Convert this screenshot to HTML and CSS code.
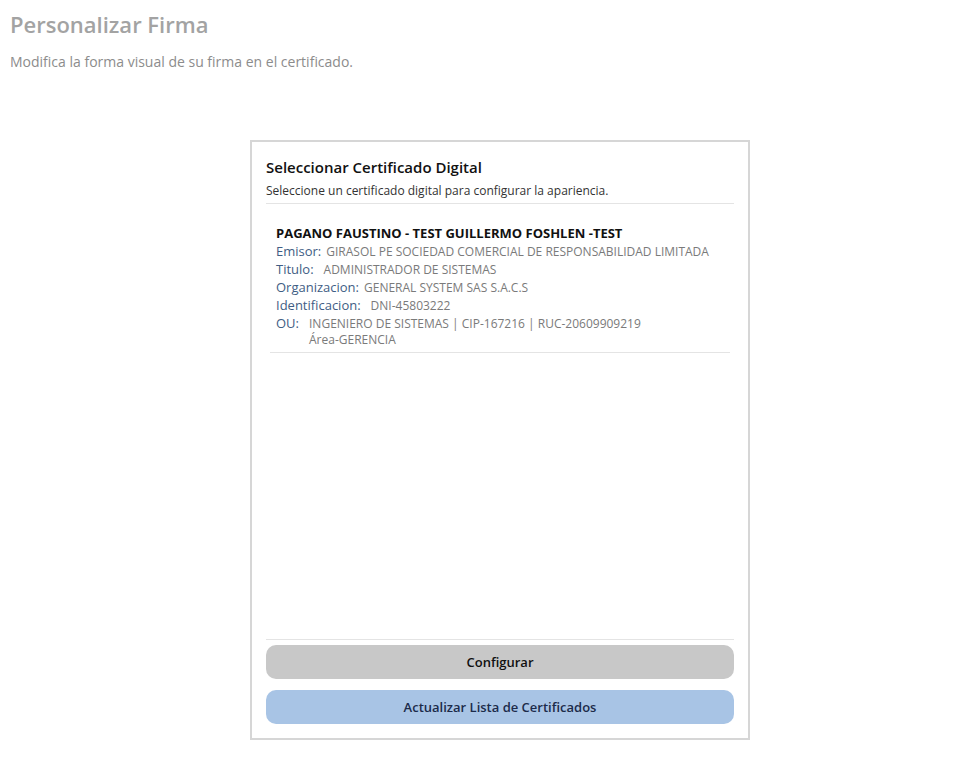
FILE: index.html
```html
<!DOCTYPE html>
<html lang="es">
<head>
<meta charset="UTF-8">
<meta name="viewport" content="width=device-width, initial-scale=1.0">
<title>Personalizar Firma</title>
<link rel="stylesheet" href="styles.css">
</head>
<body>
<div class="page-header">
    <h1>Personalizar Firma</h1>
    <p>Modifica la forma visual de su firma en el certificado.</p>
</div>
<div class="card">
    <div class="card-head">
        <h2>Seleccionar Certificado Digital</h2>
        <p>Seleccione un certificado digital para configurar la apariencia.</p>
    </div>
    <div class="cert-list">
        <div class="cert">
            <div class="cert-name">PAGANO FAUSTINO - TEST GUILLERMO FOSHLEN -TEST</div>
            <div class="row"><span class="label">Emisor:</span><span class="value">GIRASOL PE SOCIEDAD COMERCIAL DE RESPONSABILIDAD LIMITADA</span></div>
            <div class="row"><span class="label">Titulo:</span><span class="value wide">ADMINISTRADOR DE SISTEMAS</span></div>
            <div class="row"><span class="label">Organizacion:</span><span class="value">GENERAL SYSTEM SAS S.A.C.S</span></div>
            <div class="row"><span class="label">Identificacion:</span><span class="value wide">DNI-45803222</span></div>
            <div class="row"><span class="label">OU:</span><span class="value wide">INGENIERO DE SISTEMAS | CIP-167216 | RUC-20609909219<br>Área-GERENCIA</span></div>
        </div>
    </div>
    <div class="card-foot">
        <button class="btn btn-gray">Configurar</button>
        <button class="btn btn-blue">Actualizar Lista de Certificados</button>
    </div>
</div>
</body>
</html>
```

FILE: styles.css
```css
body {
    font-family: 'Open Sans', 'Liberation Sans', sans-serif;
    margin: 0;
    padding: 0;
    background-color: #fff;
    color: #222;
}
.page-header {
    padding: 9px 10px 0;
}
.page-header h1 {
    margin: 0;
    font-size: 22px;
    font-weight: 600;
    color: #a3a3a3;
    line-height: 30px;
}
.page-header p {
    margin: 13px 0 0;
    font-size: 14px;
    color: #8c8c8c;
    line-height: 20px;
}
.card {
    width: 468px;
    height: 582px;
    margin: 68px 0 0 250px;
    padding: 0 14px 14px;
    border: 2px solid #d6d6d6;
    display: flex;
    flex-direction: column;
}
.card-head {
    padding-top: 14px;
    padding-bottom: 3px;
    border-bottom: 1px solid #e4e4e4;
}
.card-head h2 {
    margin: 0;
    font-size: 15px;
    font-weight: 600;
    color: #111;
    line-height: 22px;
}
.card-head p {
    margin: 4px 0 0;
    font-size: 12px;
    color: #333;
    line-height: 18px;
}
.cert-list {
    flex: 1;
    padding: 0 4px;
}
.cert {
    padding: 20px 6px 4px;
    border-bottom: 1px solid #e4e4e4;
}
.cert-name {
    font-size: 13px;
    font-weight: 700;
    color: #111;
    line-height: 18px;
}
.row {
    display: flex;
    align-items: baseline;
    line-height: 18px;
}
.label {
    font-size: 13px;
    color: #3f5d84;
}
.value {
    font-size: 12px;
    color: #7a7a7a;
    margin-left: 5px;
    line-height: 16px;
}
.value.wide {
    margin-left: 10px;
}
.card-foot {
    border-top: 1px solid #e4e4e4;
    padding-top: 5px;
    display: flex;
    flex-direction: column;
    gap: 11px;
}
.btn {
    font-family: 'Open Sans', 'Liberation Sans', sans-serif;
    font-size: 13px;
    font-weight: 600;
    height: 34px;
    border: none;
    border-radius: 10px;
    cursor: pointer;
}
.btn-gray {
    background-color: #c8c8c8;
    color: #111;
}
.btn-blue {
    background-color: #a8c4e5;
    color: #1c2b4a;
}
```
